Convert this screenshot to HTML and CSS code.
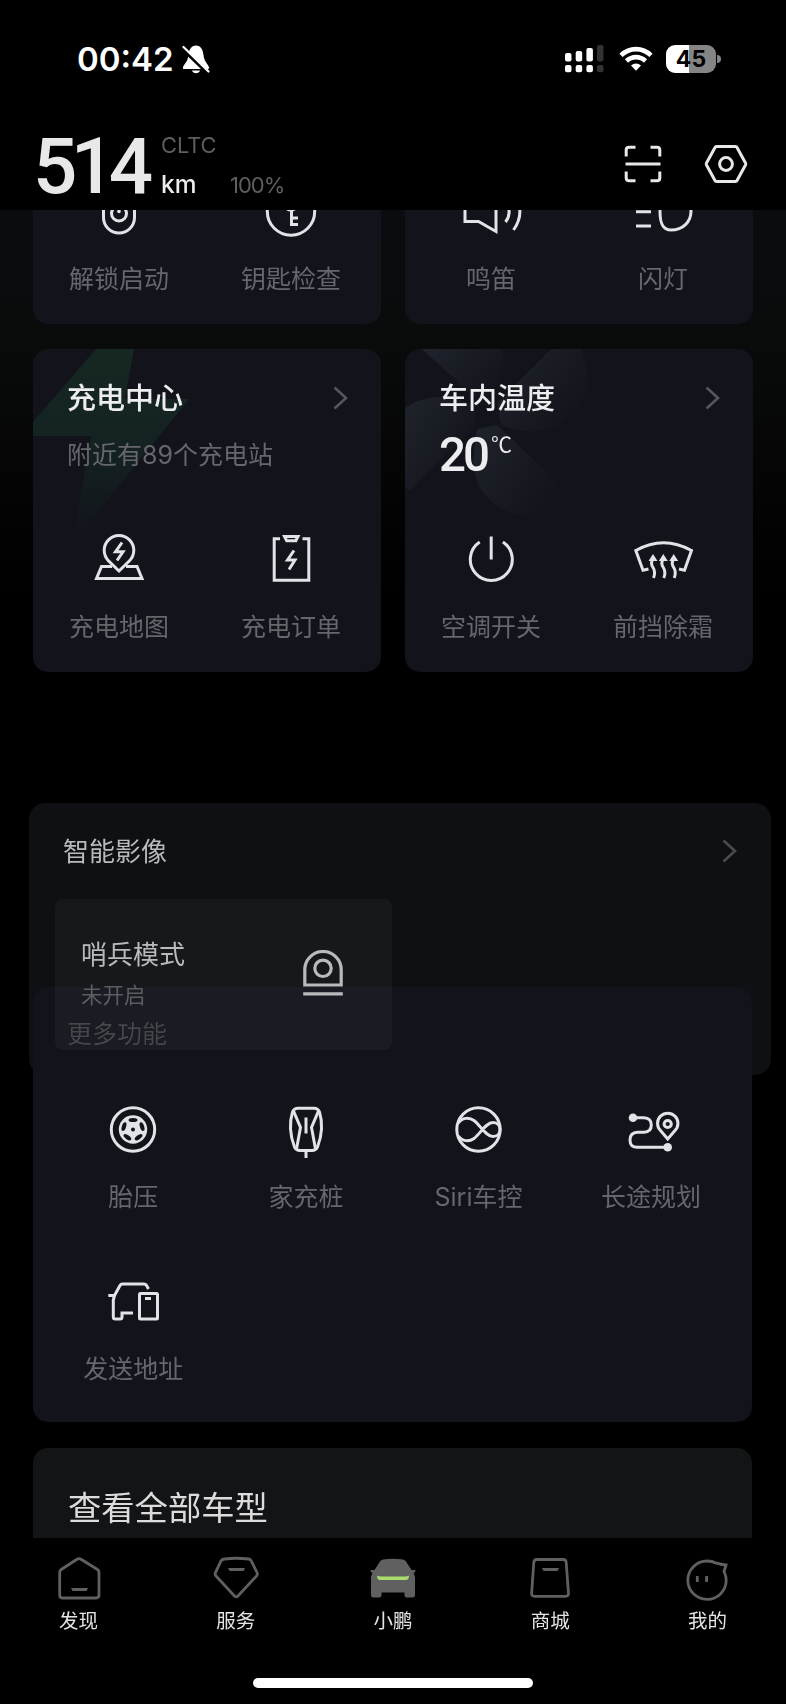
FILE: index.html
```html
<!DOCTYPE html>
<html lang="zh-CN">
<head>
    <meta charset="UTF-8">
    <title>小鹏汽车</title>
    <link rel="stylesheet" href="styles.css">
</head>
<body>

    <!-- 顶部：状态栏 + 续航 -->
    <header class="header">
        <div class="status-bar">
            <div class="status-left">
                <span class="time">00:42</span>
                <svg width="28" height="30" viewBox="0 0 28 30">
                    <path d="M14 1.500C9 1.500 7 6 6.500 11C6 17 3 19 1 23C.500 24.500 1 25 2 25H26C27 25 27.500 24 27 23C25 19 22 17 21.500 11C21 6 19 1.500 14 1.500ZM10 26.500C11 30 17 30 18 26.500Z" fill="#fff"/>
                    <path d="M1 5L26 29" stroke="#000" stroke-width="4"/>
                    <path d="M1.500 3L26.500 27.500" stroke="#fff" stroke-width="2.200" stroke-linecap="round"/>
                </svg>
            </div>
            <div class="status-right">
                <svg class="signal" width="40" height="28" viewBox="0 0 40 28" fill="#fff">
                    <rect x="0" y="8" width="6.500" height="8.500" rx="2"/>
                    <rect x="10.700" y="6" width="6.500" height="10.500" rx="2"/>
                    <rect x="21.400" y="3" width="6.500" height="13.500" rx="2"/>
                    <rect x="32" y="0" width="6.500" height="16.500" rx="2" fill="#333"/>
                    <rect x="0" y="20" width="6.500" height="7.200" rx="2"/>
                    <rect x="10.700" y="20" width="6.500" height="7.200" rx="2"/>
                    <rect x="21.400" y="20" width="6.500" height="7.200" rx="2"/>
                    <rect x="32" y="20" width="6.500" height="7.200" rx="2" fill="#333"/>
                </svg>
                <svg class="wifi" width="34" height="26" viewBox="0 0 34 26" fill="none" stroke="#fff" stroke-width="4.600">
                    <path d="M2 9.300C10.500 1 23.500 1 32 9.300"/>
                    <path d="M7.500 15C13 9.800 21 9.800 26.500 15"/>
                    <path d="M12 19.500C15 16.800 19 16.800 22 19.500L17 24.700Z" fill="#fff" stroke="none"/>
                </svg>
                <div class="battery"><span>45</span></div>
            </div>
        </div>
        <div class="range-bar">
            <div class="range">514</div>
            <div class="range-info">
                <div class="cltc">CLTC</div>
                <div class="range-unit"><span class="km">km</span><span class="percent">100%</span></div>
            </div>
            <div class="header-icons">
                <svg width="38" height="38" viewBox="0 0 38 38" fill="none" stroke="#e8e8e8" stroke-width="3">
                    <path d="M2.200 11.500V5Q2.200 2.200 5 2.200H11.500M26.500 2.200H33Q35.800 2.200 35.800 5V11.500M35.800 26.500V33Q35.800 35.800 33 35.800H26.500M11.500 35.800H5Q2.200 35.800 2.200 33V26.500M1.500 19H36.500"/>
                </svg>
                <svg width="44" height="40" viewBox="0 0 44 40" fill="none" stroke="#e8e8e8" stroke-width="3" stroke-linejoin="round">
                    <path d="M12.500 2.500H31.500Q32.500 2.500 33 3.500L41.500 19Q42 20 41.500 21L33 36.500Q32.500 37.500 31.500 37.500H12.500Q11.500 37.500 11 36.500L2.500 21Q2 20 2.500 19L11 3.500Q11.500 2.500 12.500 2.500Z"/>
                    <circle cx="22" cy="20" r="6.400"/>
                </svg>
            </div>
        </div>
    </header>

    <!-- 滚动内容 -->
    <main class="content">

        <div class="row row-top">
            <section class="card card-top">
                <div class="actions">
                    <div class="action">
                        <svg class="icon" viewBox="0 0 56 56">
                            <rect x="12.500" y="6" width="31" height="43" rx="15.500"/>
                            <circle cx="28" cy="29.500" r="7.500"/>
                            <circle class="fill" cx="28" cy="27.500" r="1.800"/>
                        </svg>
                        <span>解锁启动</span>
                    </div>
                    <div class="action">
                        <svg class="icon" viewBox="0 0 56 56">
                            <circle cx="28" cy="27.500" r="23.700"/>
                            <circle cx="28" cy="19" r="7"/>
                            <path d="M28.500 26V42M28 34H35M28 40.500H35"/>
                        </svg>
                        <span>钥匙检查</span>
                    </div>
                </div>
            </section>
            <section class="card card-top">
                <div class="actions">
                    <div class="action">
                        <svg class="icon" viewBox="0 0 56 56">
                            <path d="M2 37.500H15.500L33 47.500V8L15.500 18H2ZM42 18Q50 28 42.500 38M51 10Q63 28 50.500 46"/>
                        </svg>
                        <span>鸣笛</span>
                    </div>
                    <div class="action">
                        <svg class="icon" viewBox="0 0 56 56">
                            <path d="M1 13.500H16M1 27.700H16M1 42H16M37 9C49 9 56 17 56 27C56 38 48 46 36 46C27 46 25 38 25 27.500C25 17 27 9 37 9Z"/>
                        </svg>
                        <span>闪灯</span>
                    </div>
                </div>
            </section>
        </div>

        <div class="row">
            <section class="card">
                <svg class="decor" width="160" height="215" viewBox="0 0 160 215">
                    <defs>
                        <linearGradient id="green" x1="0" y1="0" x2="0" y2="1">
                            <stop offset="0" stop-color="#162822"/>
                            <stop offset=".45" stop-color="#142322"/>
                            <stop offset="1" stop-color="#12131b"/>
                        </linearGradient>
                    </defs>
                    <path d="M63 0H101L92 50H156L39 195L58 87H0V73Z" fill="url(#green)"/>
                </svg>
                <div class="card-head">
                    <h3>充电中心</h3>
                    <svg class="arrow" viewBox="0 0 16 24"><path d="M1.500 1.500L13 12L1.500 22.500"/></svg>
                </div>
                <p class="nearby">附近有89个充电站</p>
                <div class="actions">
                    <div class="action">
                        <svg class="icon" viewBox="0 0 56 56">
                            <path d="M28 39L17.500 28.800A14.800 14.800 0 1 1 38.500 28.800ZM21 34.500H10.500L5.500 46.500H51L46 34.500H35"/>
                            <path d="M31 10.500L24.500 19.800H32L26 28.500"/>
                        </svg>
                        <span>充电地图</span>
                    </div>
                    <div class="action">
                        <svg class="icon" viewBox="0 0 56 56">
                            <path d="M17 6.800H11.200V48.300H45.800V6.800H39.500M21.500 4.500H35L32.800 8.800H23.700Z"/>
                            <path d="M31 18.500L24.500 28H32L26 37.500"/>
                        </svg>
                        <span>充电订单</span>
                    </div>
                </div>
            </section>
            <section class="card">
                <svg class="decor" width="190" height="170" viewBox="0 0 190 170">
                    <defs>
                        <linearGradient id="fan" x1="0" y1="0" x2="1" y2=".7">
                            <stop offset="0" stop-color="#1f232b"/>
                            <stop offset="1" stop-color="#12141b"/>
                        </linearGradient>
                    </defs>
                    <g fill="url(#fan)">
                        <path d="M17 0L79 57Q102 38 98 8L96 0Z"/>
                        <path d="M146 0L92 54L96 76Q120 86 146 80Q178 66 183 35Q183 14 176 0Z"/>
                        <path d="M0 59Q34 37 70 58V78L5 141L0 138Z"/>
                        <path d="M72 80L92 76L140 122Q156 128 155 146Q138 166 111 166Q70 152 68 112Z"/>
                    </g>
                </svg>
                <div class="card-head">
                    <h3>车内温度</h3>
                    <svg class="arrow" viewBox="0 0 16 24"><path d="M1.500 1.500L13 12L1.500 22.500"/></svg>
                </div>
                <p class="temp">20<span>℃</span></p>
                <div class="actions">
                    <div class="action">
                        <svg class="icon" viewBox="0 0 56 56">
                            <path d="M16.700 10A21 21 0 1 0 39.900 10M28.200 4.500V27.500"/>
                        </svg>
                        <span>空调开关</span>
                    </div>
                    <div class="action">
                        <svg class="icon" viewBox="0 0 56 56">
                            <path d="M13.500 37L8 38.300L.800 18.500Q28.500 3 56.500 18.500L49.500 38.300L44 37"/>
                            <path d="M18 27Q15 31 18 35.500T18.500 46M28.300 27Q25.300 31 28.300 35.500T28.800 46M38.700 27Q35.700 31 38.700 35.500T39.200 46"/>
                            <path class="fill" d="M13.500 29L18 22L22.500 29ZM23.800 29L28.300 22L32.800 29ZM34.200 29L38.700 22L43.200 29Z"/>
                        </svg>
                        <span>前挡除霜</span>
                    </div>
                </div>
            </section>
        </div>

        <!-- 拖动中的卡片，压在“更多功能”上面 -->
        <section class="camera">
            <div class="camera-head">
                <h3>智能影像</h3>
                <svg class="arrow" viewBox="0 0 16 24"><path d="M1.500 1.500L13 12L1.500 22.500"/></svg>
            </div>
            <div class="sentry">
                <div>
                    <h4>哨兵模式</h4>
                    <p>未开启</p>
                </div>
                <svg width="40" height="46" viewBox="0 0 40 46" fill="none" stroke="#b9babd" stroke-width="3.200">
                    <path d="M1.800 35V19.500A18.200 18 0 0 1 38.200 19.500V35ZM.200 43.800H39.800"/>
                    <circle cx="20" cy="18.300" r="8.200"/>
                </svg>
            </div>
        </section>

        <section class="more">
            <h3>更多功能</h3>
            <div class="more-grid">
                <div class="action">
                    <svg class="icon" viewBox="0 0 56 56">
                        <circle cx="28" cy="27.500" r="21.700"/>
                        <circle class="fill" cx="28" cy="27.500" r="14.200"/>
                        <g class="hole">
                            <ellipse cx="28" cy="18" rx="4.500" ry="2.100"/>
                            <ellipse cx="28" cy="18" rx="4.500" ry="2.100" transform="rotate(72 28 27.500)"/>
                            <ellipse cx="28" cy="18" rx="4.500" ry="2.100" transform="rotate(144 28 27.500)"/>
                            <ellipse cx="28" cy="18" rx="4.500" ry="2.100" transform="rotate(216 28 27.500)"/>
                            <ellipse cx="28" cy="18" rx="4.500" ry="2.100" transform="rotate(288 28 27.500)"/>
                            <circle cx="28" cy="27.500" r="2"/>
                        </g>
                    </svg>
                    <span>胎压</span>
                </div>
                <div class="action">
                    <svg class="icon" viewBox="0 0 56 56">
                        <path d="M20 6.200H36Q40 6.200 41.500 10Q44 18 43.500 27Q43 36 39.500 45Q38 48.500 34 48.500H22Q18 48.500 16.500 45Q13 36 12.500 27Q12 18 14.500 10Q16 6.200 20 6.200Z"/>
                        <path d="M15.500 9L22.500 25.500L18.500 47M40.500 9L33.500 25.500L37.500 47M28 15.500V31.500M28 48.500V56"/>
                    </svg>
                    <span>家充桩</span>
                </div>
                <div class="action">
                    <svg class="icon" viewBox="0 0 56 56">
                        <circle cx="28.500" cy="27.500" r="21.700"/>
                        <path d="M8.500 21C12 15.500 19 15 24 18.500C30 23 36 34.500 43 34.500C48 34.500 50 31 50 27.500C50 24 48 20.500 43 20.500C36 20.500 30 32 24 36.500C19 40 12 39.500 8.500 34"/>
                    </svg>
                    <span>Siri车控</span>
                </div>
                <div class="action">
                    <svg class="icon" viewBox="0 0 56 56">
                        <path d="M10 15.700H21Q28.300 16 28.300 23T21 30.300H14.500Q7 30.500 7 38T14.500 45.300H44"/>
                        <circle class="fill" cx="10" cy="15.700" r="4.300"/>
                        <circle class="fill" cx="44.700" cy="45.300" r="4.300"/>
                        <path d="M44.700 37L37.500 28.500A10.200 10.200 0 1 1 52 28.500Z"/>
                        <circle cx="44.700" cy="22" r="3.600"/>
                    </svg>
                    <span>长途规划</span>
                </div>
                <div class="action">
                    <svg class="icon" viewBox="0 0 56 56">
                        <path d="M3.300 21.500H9.500L15 11.500Q15.800 10 17.500 10H39Q40.500 10 41.300 11L43.500 15M9.500 21.500L8.300 26V43Q8.300 45 10.300 45H15Q17 45 17 43V39H28"/>
                        <rect x="34.500" y="19.500" width="18" height="25.500" rx="1"/>
                        <path d="M40 24.500H46"/>
                    </svg>
                    <span>发送地址</span>
                </div>
            </div>
        </section>

        <section class="all-cars">
            <h2>查看全部车型</h2>
        </section>
    </main>

    <!-- 底部导航 -->
    <footer class="footer">
        <nav class="tabs">
            <div class="tab">
                <svg viewBox="0 0 48 48">
                    <path d="M22 5.300Q24 4 26 5.300L42.500 15.500Q44 16.500 44 18.500V41Q44 44 41 44H7.500Q4.700 44 4.700 41V18.500Q4.700 16.500 6.200 15.500Z"/>
                    <path class="gray" d="M16 34H33L31.500 37H17.500Z"/>
                </svg>
                <span>发现</span>
            </div>
            <div class="tab">
                <svg viewBox="0 0 48 48">
                    <path d="M12.500 5Q24 3.500 36.500 5Q38.500 5.200 39.300 7L45 18.500Q46 20.500 44.500 22L26 42Q24.200 43.700 22.500 42L4 22Q2.500 20.500 3.500 18.500L9 7Q10 5.200 12.500 5Z"/>
                    <path class="gray" d="M16 14H33L31.500 17H17.500Z"/>
                </svg>
                <span>服务</span>
            </div>
            <div class="tab">
                <svg viewBox="0 0 48 48">
                    <path class="gray" d="M14 5.500Q24 4 34 5.500Q36 6 37 7.500L42.500 16H46.500L46 18.500H44.500L46 23V41Q46 43.500 43.500 43.500H38Q35.500 43.500 35.500 41V38.500H12.500V41Q12.500 43.500 10 43.500H4.500Q2 43.500 2 41V23L3.500 18.500H2L1.500 16H5.500L11 7.500Q12 6 14 5.500Z"/>
                    <path class="lime" d="M8 21.500Q9 22.300 12 22.500H36Q39 22.300 40 21.500Q40 26 36.500 26H11.500Q8 26 8 21.500Z"/>
                </svg>
                <span>小鹏</span>
            </div>
            <div class="tab">
                <svg viewBox="0 0 48 48">
                    <path d="M11 5.500H37Q40 5.500 40.200 8.500L42.500 39.500Q42.600 42.300 39.500 42.300H8.500Q5.500 42.300 5.600 39.500L7.800 8.500Q8 5.500 11 5.500Z"/>
                    <path class="gray" d="M16 14H33L31.500 17H17.500Z"/>
                </svg>
                <span>商城</span>
            </div>
            <div class="tab">
                <svg viewBox="0 0 48 48">
                    <path d="M43 11L41 17.500Q43.200 22 43.200 26A19.200 19.200 0 1 1 24 7Q29 7 33.500 9.200Q38 10.500 43 11Z"/>
                    <path d="M14.300 22V28M23.600 22V28"/>
                </svg>
                <span>我的</span>
            </div>
        </nav>
        <div class="home-indicator"></div>
    </footer>

</body>
</html>
```
FILE: styles.css
```css
* {
    box-sizing: border-box;
    margin: 0;
    padding: 0;
}
body {
    width: 786px;
    height: 1704px;
    display: flex;
    flex-direction: column;
    overflow: hidden;
    background-color: #000;
    color: #ededf0;
    font-family: Inter, 'Noto Sans CJK SC', sans-serif;
}
svg {
    display: block;
    flex-shrink: 0;
}
h2, h3, h4 {
    font-weight: 400;
}

/* 顶部 */
.header {
    height: 210px;
    flex-shrink: 0;
    background-color: #000;
    position: relative;
    z-index: 2;
}
.status-bar {
    height: 117px;
    display: flex;
    justify-content: space-between;
    align-items: center;
    padding: 0 65px 0 77px;
}
.status-left, .status-right {
    display: flex;
    align-items: center;
}
.time {
    color: #fff;
    font-size: 33px;
    font-weight: 570;
    margin-right: 8px;
}
.signal {
    margin-right: 14px;
}
.wifi {
    margin-right: 13px;
}
.battery {
    width: 50px;
    height: 28px;
    border-radius: 9px;
    background: linear-gradient(90deg, #fff 47%, #858585 47%);
    color: #000;
    font-size: 23px;
    font-weight: 700;
    line-height: 28px;
    text-align: center;
    margin-right: 5px;
    position: relative;
}
.battery::after {
    content: '';
    position: absolute;
    right: -5px;
    top: 10px;
    width: 4px;
    height: 8px;
    border-radius: 0 4px 4px 0;
    background-color: #858585;
}
.range-bar {
    display: flex;
    height: 93px;
    padding: 12px 38px 0 33px;
}
.range {
    width: 128px;
    color: #e8e8e8;
    font-family: Roboto, sans-serif;
    font-size: 78px;
    font-weight: 500;
    letter-spacing: -6.5px;
    line-height: 75px;
}
.range-info {
    flex: 1;
}
.cltc {
    color: #5f5f5f;
    font-size: 21.8px;
    line-height: 32px;
}
.range-unit {
    display: flex;
    align-items: baseline;
    line-height: 46px;
}
.km {
    width: 69px;
    font-size: 24.5px;
    font-weight: 500;
}
.percent {
    color: #5f5f5f;
    font-size: 22px;
    letter-spacing: -1px;
}
.header-icons {
    display: flex;
    align-items: center;
    gap: 42px;
    height: 69px;
}

/* 卡片 */
.content {
    height: 1328px;
    flex-shrink: 0;
    overflow: hidden;
    background: linear-gradient(#0a0c0f 0, #0a0b0b 120px, #000 380px);
}
.row {
    display: flex;
    gap: 24px;
    padding-left: 33px;
    margin-bottom: 25px;
}
.row-top {
    margin-top: -60px;
}
.card {
    position: relative;
    display: flex;
    flex-direction: column;
    width: 348px;
    height: 323px;
    padding: 30px 2px 27px;
    border-radius: 15px;
    background-color: #12131b;
    overflow: hidden;
}
.card-top {
    height: 174px;
}
.decor {
    position: absolute;
    top: 0;
    left: 0;
}
.card-head {
    position: relative;
    display: flex;
    justify-content: space-between;
    align-items: center;
    padding: 0 30px 0 32px;
}
.card-head h3 {
    font-size: 29px;
    font-weight: 500;
    line-height: 40px;
}
.arrow {
    width: 16px;
    height: 24px;
    margin-bottom: 2px;
    fill: none;
    stroke: #55565a;
    stroke-width: 2.6;
}
.nearby {
    position: relative;
    margin-top: 18px;
    padding-left: 32px;
    color: #66676c;
    font-size: 25px;
    line-height: 36px;
}
.temp {
    position: relative;
    display: flex;
    margin-top: 12px;
    padding-left: 32px;
    font-family: Roboto, 'Noto Sans CJK SC', sans-serif;
    font-size: 47.5px;
    font-weight: 500;
    letter-spacing: -3px;
    line-height: 48px;
}
.temp span {
    margin-left: 4px;
    font-family: 'Noto Sans CJK SC', sans-serif;
    font-size: 21px;
    font-weight: 400;
    line-height: 24px;
}
.actions {
    display: flex;
    margin-top: auto;
    width: 344px;
    margin-left: -2px;
}
.action {
    flex: 1;
    display: flex;
    flex-direction: column;
    align-items: center;
    gap: 21px;
    color: #66676c;
    font-size: 25px;
    line-height: 36px;
}
.icon {
    width: 56px;
    height: 56px;
    overflow: visible;
    fill: none;
    stroke: #e2e3e6;
    stroke-width: 3;
}
.icon .fill {
    fill: #e2e3e6;
    stroke: none;
}
.icon .hole {
    fill: #12131b;
    stroke: none;
}

/* 智能影像 */
.camera {
    position: relative;
    z-index: 1;
    width: 742px;
    height: 272px;
    margin: 131px 0 0 29px;
    padding: 29px 26px 0;
    border-radius: 16px;
    background-color: #0f1014;
    mix-blend-mode: lighten;
}
.camera-head {
    display: flex;
    justify-content: space-between;
    align-items: center;
    padding: 0 7px 0 8px;
}
.camera-head h3 {
    color: #b9babd;
    font-size: 26px;
    line-height: 40px;
}
.camera-head .arrow {
    stroke: #4a4b4e;
}
.sentry {
    display: flex;
    justify-content: space-between;
    width: 337px;
    height: 151px;
    margin-top: 27px;
    padding: 36px 49px 0 26px;
    border-radius: 8px;
    background: linear-gradient(#17181c 88px, #191c23 88px);
}
.sentry svg {
    margin-top: 15px;
}
.sentry h4 {
    color: #b9babd;
    font-size: 26px;
    line-height: 40px;
}
.sentry p {
    margin-top: 5px;
    color: #5c5d61;
    font-size: 21.5px;
    line-height: 30px;
}

/* 更多功能 */
.more {
    width: 719px;
    height: 435px;
    margin: -88px 0 26px 33px;
    padding-top: 29px;
    border-radius: 15px;
    background-color: #12131b;
}
.more h3 {
    padding-left: 34px;
    color: #45474b;
    font-size: 25px;
    line-height: 36px;
}
.more-grid {
    display: grid;
    grid-template-columns: repeat(4, 172.6px);
    row-gap: 58.5px;
    padding-left: 14px;
    margin-top: 50px;
}

.all-cars {
    width: 719px;
    height: 200px;
    margin-left: 33px;
    padding: 36px 35px;
    border-radius: 15px;
    background-color: #121415;
}
.all-cars h2 {
    color: #dcdcdc;
    font-size: 33.3px;
    line-height: 48px;
}

/* 底部导航 */
.footer {
    flex: 1;
    background-color: #000;
}
.tabs {
    display: flex;
    padding-top: 16px;
}
.tab {
    flex: 1;
    display: flex;
    flex-direction: column;
    align-items: center;
    gap: 4px;
    color: #e4e4e4;
    font-size: 19.5px;
    line-height: 30px;
}
.tab svg {
    width: 48px;
    height: 48px;
    fill: none;
    stroke: #606060;
    stroke-width: 2.8;
}
.tab .gray {
    fill: #606060;
    stroke: none;
}
.tab .lime {
    fill: #a9dc6c;
    stroke: none;
}
.home-indicator {
    width: 280px;
    height: 10px;
    margin: 42px auto 0;
    border-radius: 5px;
    background-color: #fff;
}
```
